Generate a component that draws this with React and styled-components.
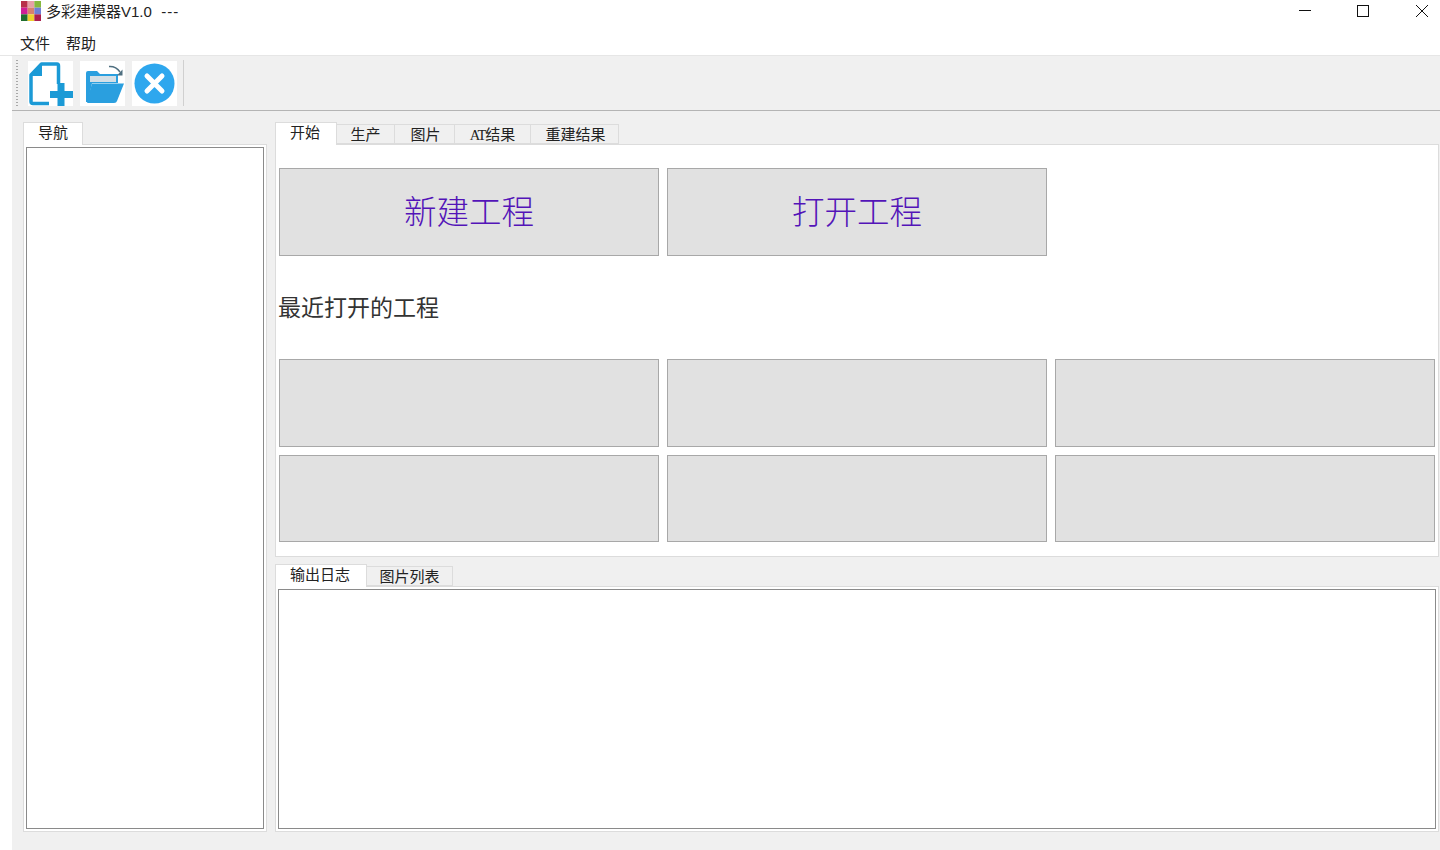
import styled, { createGlobalStyle } from 'styled-components';

const Global = createGlobalStyle`
  html, body { margin: 0; padding: 0; background: #fff; }
  body { font-family: "Liberation Sans", "Noto Sans CJK SC", sans-serif; color: #222; }
`;

const Window = styled.div`
  width: 1440px;
  height: 850px;
  background: #fff;
  display: flex;
  flex-direction: column;
  overflow: hidden;
`;

const TitleBar = styled.div`
  height: 30px;
  flex: none;
  display: flex;
  align-items: flex-start;
  padding-left: 21px;
`;

const TitleText = styled.div`
  margin-left: 5px;
  font-size: 15px;
  line-height: 24px;
  color: #222;
  white-space: pre;
`;

const Dashes = styled.span`
  letter-spacing: 1px;
  margin-left: 1px;
`;

const WinButtons = styled.div`
  margin-left: auto;
  display: flex;
  gap: 46px;
  height: 22px;
  align-items: center;
  padding-right: 12px;
`;

const WinButton = styled.div`
  width: 12px;
  height: 12px;
  display: flex;
  &:last-child { margin-left: 1px; }
`;

const MenuBar = styled.div`
  height: 25px;
  flex: none;
  display: flex;
  gap: 16px;
  padding-left: 20px;
  font-size: 15px;
  line-height: 28px;
  border-bottom: 1px solid #e6e6e6;
`;

const Body = styled.div`
  flex: 1;
  margin-left: 12px;
  background: #f0f0f0;
  display: flex;
  flex-direction: column;
  min-height: 0;
`;

const ToolBar = styled.div`
  height: 54px;
  flex: none;
  display: flex;
  align-items: center;
  padding-left: 4px;
  border-bottom: 1px solid #b4b4b4;
`;

const Grip = styled.div`
  width: 2px;
  height: 46px;
  margin-right: 10px;
  background: repeating-linear-gradient(to bottom, #a8a8a8 0 1px, transparent 1px 3px);
`;

const ToolIcon = styled.div`
  width: 45px;
  height: 45px;
  background: #fff;
  margin-right: 7px;
  display: flex;
`;

const Sep = styled.div`
  width: 1px;
  height: 46px;
  background: #d0d0d0;
  margin-left: -1px;
`;

const Main = styled.div`
  flex: 1;
  min-height: 0;
  display: flex;
  gap: 8px;
  padding: 11px 1px 18px 11px;
`;

const LeftDock = styled.div`
  width: 244px;
  flex: none;
  display: flex;
  flex-direction: column;
`;

const RightDock = styled.div`
  flex: 1;
  min-width: 0;
  display: flex;
  flex-direction: column;
`;

const TabRow = styled.div`
  display: flex;
  align-items: flex-end;
  height: 22px;
  flex: none;
  position: relative;
  z-index: 1;
`;

const Tab = styled.div`
  box-sizing: border-box;
  width: ${p => p.$w}px;
  height: ${p => (p.$active ? 23 : 20)}px;
  margin-bottom: ${p => (p.$active ? -1 : 0)}px;
  background: ${p => (p.$active ? '#fff' : '#f0f0f0')};
  border: 1px solid #dcdcdc;
  border-bottom: ${p => (p.$active ? 'none' : '1px solid #dcdcdc')};
  border-left: ${p => (p.$first ? '1px solid #dcdcdc' : 'none')};
  font-size: 15px;
  line-height: 19px;
  text-align: center;
  color: #222;
  padding-left: ${p => p.$padLeft || 0}px;
  padding-right: ${p => p.$padRight || 0}px;
  white-space: pre;
`;

const Latin = styled.span`
  font-family: "Liberation Serif", serif;
  font-size: 14.500px;
  letter-spacing: -1px;
`;

const Pane = styled.div`
  box-sizing: border-box;
  background: #fff;
  border: 1px solid #dcdcdc;
  display: flex;
  flex-direction: column;
  min-height: 0;
`;

const DockPane = styled(Pane)`
  flex: 1;
  padding: 2px;
`;

const StartPane = styled(Pane)`
  height: 413px;
  flex: none;
  padding: 23px 3px 0;
`;

const LogPane = styled(Pane)`
  flex: 1;
  padding: 2px;
`;

const Box = styled.div`
  flex: 1;
  box-sizing: border-box;
  border: 1px solid #8a8a8a;
  background: #fff;
`;

const ButtonGrid = styled.div`
  display: grid;
  grid-template-columns: repeat(3, 380px);
  grid-template-rows: ${p => p.$rows};
  gap: 8px;
`;

const BigButton = styled.div`
  box-sizing: border-box;
  background: #e1e1e1;
  border: 1px solid #a8a8a8;
  color: #5314b8;
  font-size: 32.500px;
  font-weight: 300;
  padding-bottom: 6px;
  display: flex;
  align-items: center;
  justify-content: center;
`;

const RecentLabel = styled.div`
  font-size: 23px;
  line-height: 32px;
  color: #333;
  margin: 36px 0 35px -1px;
`;

const Gap = styled.div`
  height: 7px;
  flex: none;
`;

const tabs = [
  { t: '开始', w: 62, padRight: 2 },
  { t: '生产', w: 58 },
  { t: '图片', w: 60, padLeft: 2 },
  { t: <><Latin>AT</Latin>结果</>, w: 76 },
  { t: '重建结果', w: 88, padLeft: 2 },
];

const logoCells = [
  ['#b8304a', '#e6a0a8', '#86b83e'],
  ['#cf1f96', '#d8806e', '#6f7fd6'],
  ['#1f6e30', '#efd02e', '#ab1f4e'],
];

const App = () => (
  <Window>
    <Global />
    <TitleBar>
      <svg width="20" height="20" viewBox="0 0 21 21" style={{ display: 'block', marginTop: 1 }}>
        {logoCells.map((row, y) => row.map((c, x) => (
          <rect key={`${x}-${y}`} x={x * 7} y={y * 7} width="7" height="7" fill={c} />
        )))}
      </svg>
      <TitleText>多彩建模器V1.0  <Dashes>---</Dashes></TitleText>
      <WinButtons>
        <WinButton>
          <svg width="12" height="12"><path d="M0 5.500H12" stroke="#111" /></svg>
        </WinButton>
        <WinButton>
          <svg width="12" height="12"><rect x="0.500" y="0.500" width="11" height="11" fill="none" stroke="#111" /></svg>
        </WinButton>
        <WinButton>
          <svg width="12" height="12"><path d="M0 0L12 12M12 0L0 12" stroke="#111" /></svg>
        </WinButton>
      </WinButtons>
    </TitleBar>
    <MenuBar>
      <span>文件</span>
      <span>帮助</span>
    </MenuBar>
    <Body>
      <ToolBar>
        <Grip />
        <ToolIcon>
          <svg width="45" height="45" viewBox="0 0 45 45">
            <path d="M21 42.500H5Q3 42.500 3 40.500V14L13.500 3H29Q30.500 3 30.500 5V23" fill="none" stroke="#1b9ad6" strokeWidth="3.500" strokeLinejoin="round" />
            <path d="M3 15L14 3V15Z" fill="#1b9ad6" />
            <path d="M29.500 22H36.500V30H45V37H36.500V45H29.500V37H22V30H29.500Z" fill="#1b9ad6" />
          </svg>
        </ToolIcon>
        <ToolIcon>
          <svg width="45" height="45" viewBox="0 0 45 45">
            <path d="M6 41V12Q6 10 8 10H17L20 13H38V22H12L8 41Z" fill="#2a9fdf" />
            <path d="M10 15H36V21H10Z" fill="#d4dfe6" />
            <path d="M12 22.500H44L37 40Q36.500 42 34 42H8Q6.500 42 7 40Z" fill="#2a9fdf" />
            <path d="M29 5.500Q36 5 40 11" fill="none" stroke="#4f6f80" strokeWidth="1.500" />
            <path d="M42.500 8.500V14.500H37Z" fill="#4f6f80" />
          </svg>
        </ToolIcon>
        <ToolIcon>
          <svg width="45" height="45" viewBox="0 0 45 45">
            <circle cx="22.500" cy="22.500" r="20" fill="#2ea7ee" />
            <path d="M15 15L30 30M30 15L15 30" stroke="#fff" strokeWidth="5" strokeLinecap="round" />
          </svg>
        </ToolIcon>
        <Sep />
      </ToolBar>
      <Main>
        <LeftDock>
          <TabRow>
            <Tab $active $first $w={60}>导航</Tab>
          </TabRow>
          <DockPane>
            <Box />
          </DockPane>
        </LeftDock>
        <RightDock>
          <TabRow>
            {tabs.map((x, i) => (
              <Tab key={i} $active={i === 0} $first={i === 0} $w={x.w} $padLeft={x.padLeft} $padRight={x.padRight}>{x.t}</Tab>
            ))}
          </TabRow>
          <StartPane>
            <ButtonGrid $rows="88px">
              <BigButton>新建工程</BigButton>
              <BigButton>打开工程</BigButton>
            </ButtonGrid>
            <RecentLabel>最近打开的工程</RecentLabel>
            <ButtonGrid $rows="88px 87px">
              {[0, 1, 2, 3, 4, 5].map(i => <BigButton key={i} />)}
            </ButtonGrid>
          </StartPane>
          <Gap />
          <TabRow>
            <Tab $active $first $w={92} $padRight={2}>输出日志</Tab>
            <Tab $w={86}>图片列表</Tab>
          </TabRow>
          <LogPane>
            <Box />
          </LogPane>
        </RightDock>
      </Main>
    </Body>
  </Window>
);

export default App;
